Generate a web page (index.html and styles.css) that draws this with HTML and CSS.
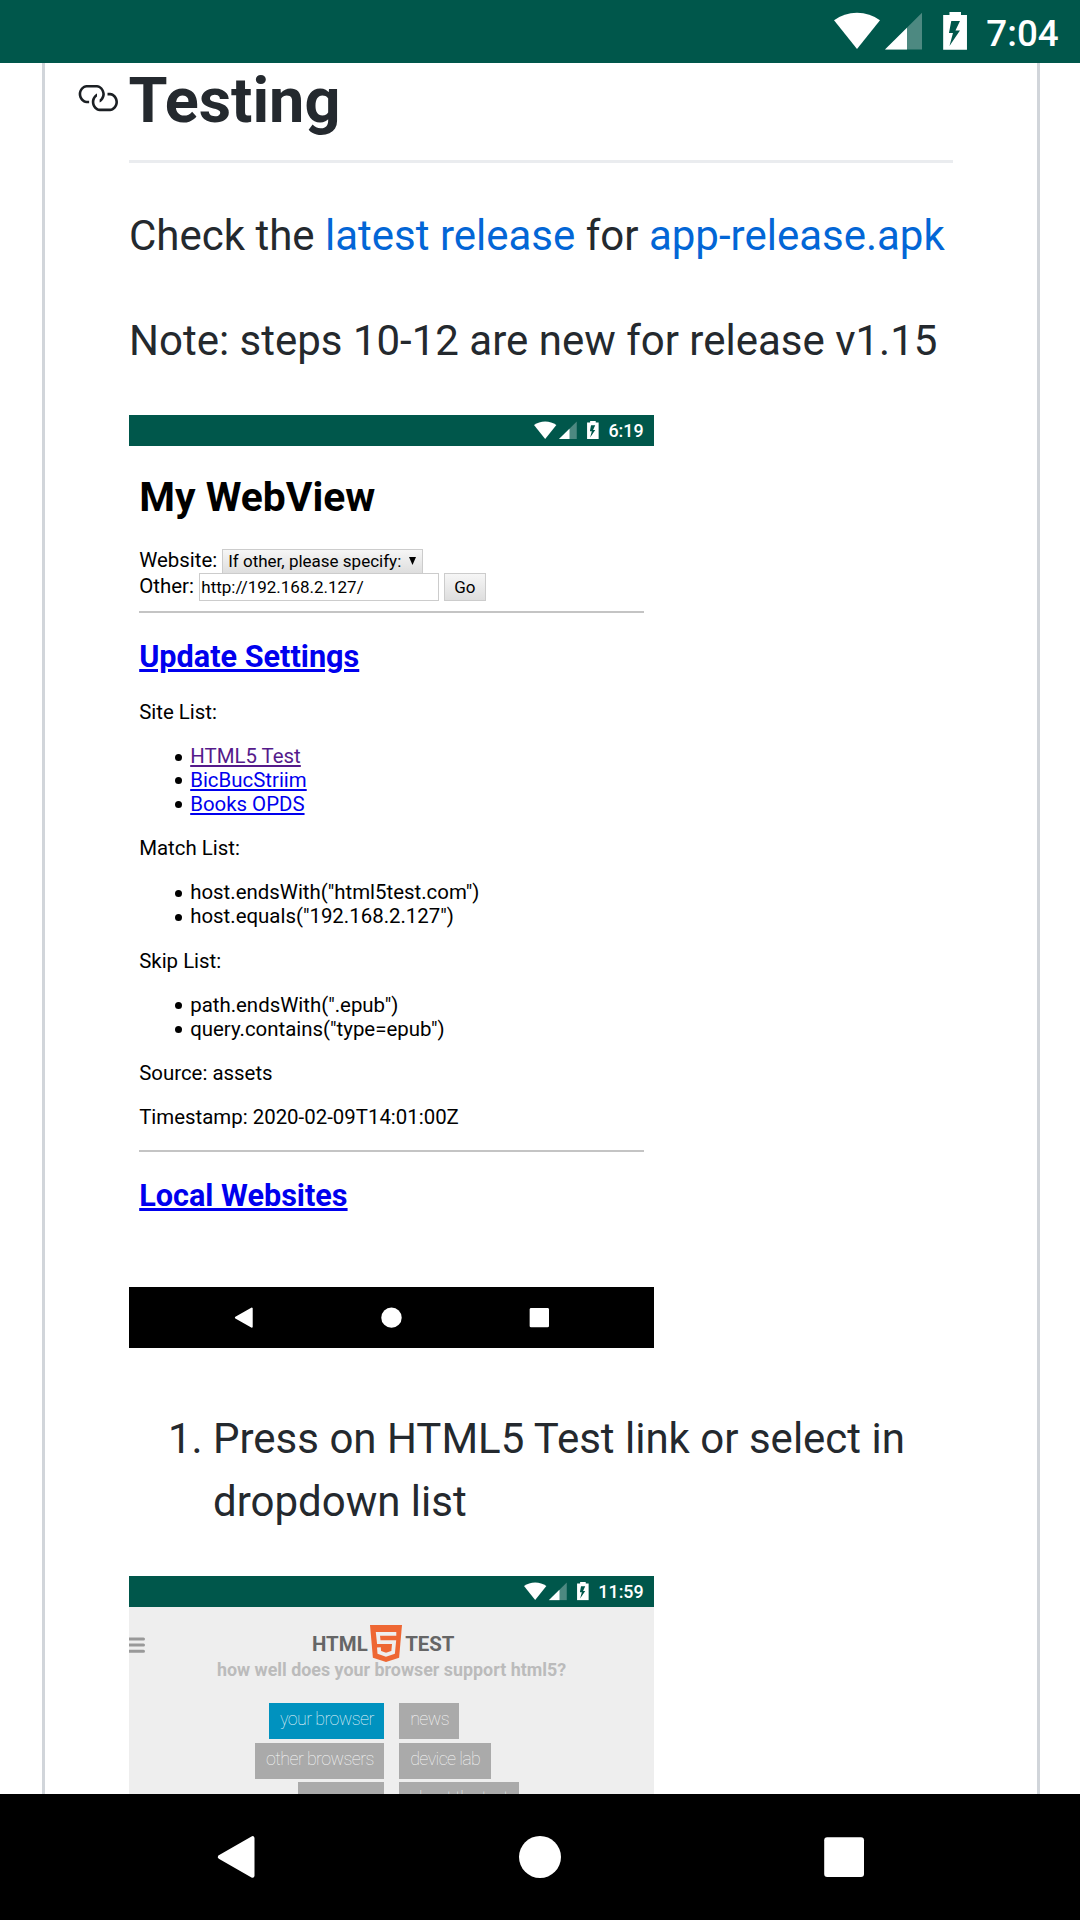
FILE: index.html
```html
<!DOCTYPE html>
<html lang="en">
<head>
<meta charset="utf-8">
<title>Testing</title>
<link rel="stylesheet" href="styles.css">
</head>
<body>
<svg class="defs" aria-hidden="true">
  <symbol id="status-icons" viewBox="0 0 134 38">
    <path fill="#fff" d="M0 8.3Q10 1 23 .8Q36 1 46 8.3L23 37Z"/>
    <path fill="#fff" fill-opacity=".3" d="M88 .8V37.5H51Z"/>
    <path fill="#fff" d="M73 15.7V37.5H51Z"/>
    <path fill="#fff" fill-rule="evenodd" d="M115.500 0h11.500v3h6v34.700h-23.800v-34.700h6.300zM117.300 9l-2.300 12h4l-3.500 13L126 18.500h-4.500L126 9z"/>
  </symbol>
  <symbol id="nav-icons" viewBox="0 0 1080 126">
    <path fill="#fff" stroke="#fff" stroke-width="4" stroke-linejoin="round" d="M219.800 63L252.500 44.200V81.800Z"/>
    <circle fill="#fff" cx="540" cy="63" r="21"/>
    <rect fill="#fff" x="824.200" y="43.200" width="39.800" height="39.800" rx="3"/>
  </symbol>
</svg>

<header class="status">
  <svg class="status-icons"><use href="#status-icons"/></svg><span>7:04</span>
</header>

<main class="page">
  <article class="readme">
    <h2 class="heading">
      <svg class="anchor" viewBox="0 0 16 16"><path fill="#1b1f23" fill-rule="evenodd" d="M4 9h1v1H4c-1.5 0-3-1.69-3-3.5S2.55 3 4 3h4c1.45 0 3 1.69 3 3.5 0 1.41-.91 2.72-2 3.25V8.590c.58-.45 1-1.270 1-2.090C10 5.280 8.980 4 8 4H4c-.98 0-2 1.220-2 2.500S3 9 4 9zm9-3h-1v1h1c1 0 2 1.220 2 2.500S13.980 12 13 12H9c-.98 0-2-1.220-2-2.500 0-.83.42-1.640 1-2.090V6.250c-1.090.53-2 1.840-2 3.250C6 11.310 7.550 13 9 13h4c1.450 0 3-1.690 3-3.500S14.500 6 13 6z"/></svg>
      Testing
    </h2>
    <p class="para">Check the <a class="link" href="#">latest release</a> for <a class="link" href="#">app-release.apk</a></p>
    <p class="para">Note: steps 10-12 are new for release v1.15</p>

    <section class="shot">
      <div class="status shot-status"><svg class="status-icons"><use href="#status-icons"/></svg><span>6:19</span></div>
      <div class="webview">
        <h1>My WebView</h1>
        <div class="field field-site"><span>Website:</span><span class="select">If other, please specify:<svg class="caret" viewBox="0 0 8 9"><path d="M0 0h8L4 9z"/></svg></span></div>
        <div class="field field-other"><span>Other:</span><span class="input">http://192.168.2.127/</span><span class="button">Go</span></div>
        <hr>
        <h2><a href="#">Update Settings</a></h2>
        <p>Site List:</p>
        <ul>
          <li><a class="seen" href="#">HTML5 Test</a></li>
          <li><a href="#">BicBucStriim</a></li>
          <li><a href="#">Books OPDS</a></li>
        </ul>
        <p>Match List:</p>
        <ul>
          <li>host.endsWith("html5test.com")</li>
          <li>host.equals("192.168.2.127")</li>
        </ul>
        <p>Skip List:</p>
        <ul>
          <li>path.endsWith(".epub")</li>
          <li>query.contains("type=epub")</li>
        </ul>
        <p>Source: assets</p>
        <p>Timestamp: 2020-02-09T14:01:00Z</p>
        <hr>
        <h2><a href="#">Local Websites</a></h2>
      </div>
      <div class="shot-nav"><svg viewBox="0 0 1080 126"><use href="#nav-icons"/></svg></div>
    </section>

    <ol class="steps">
      <li>Press on HTML5 Test link or select in dropdown list</li>
    </ol>

    <section class="shot">
      <div class="status shot-status"><svg class="status-icons"><use href="#status-icons"/></svg><span>11:59</span></div>
      <div class="html5">
        <div class="brand-row">
          <svg class="burger" viewBox="0 0 16 16"><path fill="none" stroke="#999" stroke-width="3" stroke-linecap="round" d="M-2 1.900H14.500M-2 8.100H14.500M-2 14.300H14.500"/></svg>
          <div class="brand"><span>HTML</span><svg class="shield" viewBox="0 0 32 37"><path fill="#ee6733" d="M0 0h32l-2.900 32.700L16 37 2.900 32.700z"/><path fill="none" stroke="#eee" stroke-width="3.800" d="M26.300 8.800H7.900l.9 8.400h15.300l-1 10.200L16 29.700l-6.700-2.300-.4-5"/></svg><span>TEST</span></div>
        </div>
        <div class="tagline">how well does your browser support html5?</div>
        <div class="tabs">
          <div class="tabs-col tabs-left"><span class="tab tab-on">your browser</span><span class="tab">other browsers</span><span class="tab">compare</span></div>
          <div class="tabs-col"><span class="tab">news</span><span class="tab">device lab</span><span class="tab">about the test</span></div>
        </div>
      </div>
    </section>
  </article>
</main>

<footer class="nav"><svg viewBox="0 0 1080 126"><use href="#nav-icons"/></svg></footer>
</body>
</html>
```
FILE: styles.css
```css
* { box-sizing: border-box; }

body {
  margin: 0;
  width: 1080px;
  height: 1920px;
  overflow: hidden;
  display: flex;
  flex-direction: column;
  background: #fff;
  color: #24292e;
  font-family: Roboto, "Liberation Sans", sans-serif;
}

.defs { position: absolute; width: 0; height: 0; }

/* Android status bar, sized in em so the small screens can reuse it */
.status {
  flex: none;
  display: flex;
  justify-content: flex-end;
  align-items: flex-start;
  height: 1.7143em;
  padding: .327em .58em 0 0;
  background: #00574b;
  color: #fff;
  font-size: 36.75px;
  font-weight: 500;
  line-height: 1.172;
}
.status span { margin-top: -.01em; }
.status-icons { width: 3.646em; height: 1.034em; margin-right: .5em; }

.nav { flex: none; height: 126px; background: #000; }
.nav svg, .shot-nav svg { display: block; width: 100%; height: 100%; }

.page {
  flex: 1;
  min-height: 0;
  overflow: hidden;
  padding: 0 40px 0 42px;
}
.readme {
  height: 100%;
  padding: 0 84px;
  border: solid #d1d5da;
  border-width: 0 3px;
  font-size: 42px;
  line-height: 63px;
}

.heading {
  display: flex;
  align-items: flex-start;
  height: 100px;
  margin: 0 0 41px;
  border-bottom: 3px solid #eaecef;
  font-size: 63px;
  font-weight: 700;
  line-height: 75px;
}
.anchor { flex: none; width: 42px; height: 42px; margin: 14px 10.500px 0 -53px; }
.para { margin: 0 0 42px; white-space: nowrap; }
.para + .shot { margin-top: 43px; }
.link { color: #0366d6; text-decoration: none; }

.shot {
  display: flex;
  flex-direction: column;
  width: 525px;
  height: 933.300px;
  overflow: hidden;
  font-size: 20.417px;
  line-height: 23.900px;
  color: #000;
}
.shot-status { font-size: 17.865px; }
.shot-nav { height: 61.250px; background: #000; }

.webview { flex: 1; padding: 0 10.200px; }
.webview h1 { margin: .67em 0; font-size: 40.833px; line-height: 48px; }
.webview h2 { margin: .83em 0; font-size: 30.625px; line-height: 36px; }
.webview p { margin: 20.350px 0; }
.webview ul { margin: 20.350px 0; padding-left: 36px; list-style: none; }
.webview li { display: flex; align-items: center; gap: 8px; }
.webview li::before {
  content: "";
  width: 7px;
  height: 7px;
  border-radius: 50%;
  background: #000;
}
.webview hr {
  height: 2px;
  margin: 9px 0;
  border: 0;
  background: #c4c4c4;
}
.webview .field + hr { margin-top: 9.500px; }
.webview .field + hr + h2 { margin: 26.200px 0 25.800px; }
.webview a { color: #00e; }
.webview a.seen { color: #551a8b; }

.field { display: flex; align-items: flex-start; }
.field-site { height: 25px; gap: 5px; padding-top: .500px; }
.field-other { height: 28px; gap: 5px; }
.field-other > :first-child { padding-top: 1.300px; }
.select, .input, .button {
  border: 1px solid #ccc;
  font-size: 17.014px;
}
.select, .button { background: linear-gradient(#f6f6f6, #dedede); }
.select { width: 201px; height: 25px; padding-left: 5px; line-height: 22.500px; white-space: nowrap; }
.caret { width: 7px; height: 8px; margin-left: 7.500px; vertical-align: 2px; }
.input { width: 240px; height: 28px; padding-left: 1.500px; line-height: 26px; }
.button { width: 42px; height: 28px; line-height: 26px; text-align: center; }

.steps { margin: 0; padding: 59px 0 43px 84px; }

.html5 { flex: 1; background: #eee; font-weight: 700; }
.brand-row { display: flex; align-items: flex-start; padding-top: 18.500px; }
.burger { width: 16px; height: 16px; margin-top: 11.500px; }
.brand { display: flex; margin-left: 167px; color: #666; }
.brand span { margin-top: 8px; }
.shield { width: 32px; height: 37px; margin: 0 3px 0 2.500px; }
.tagline {
  margin-top: -3px;
  color: #bbb;
  font-size: 17.865px;
  line-height: 21px;
  text-align: center;
}
.tabs { display: flex; gap: 15px; margin-top: 22.900px; }
.tabs-col { display: flex; flex-direction: column; align-items: flex-start; gap: 3.500px; }
.tabs-left { width: 255.200px; align-items: flex-end; }
.tab {
  height: 36px;
  padding: 0 10.400px 0 11px;
  background: #aaa;
  color: rgba(255, 255, 255, .9);
  font-size: 17.865px;
  font-weight: 100;
  letter-spacing: -.6px;
  line-height: 31px;
}
.tab-on { background: #0092bf; }
```
